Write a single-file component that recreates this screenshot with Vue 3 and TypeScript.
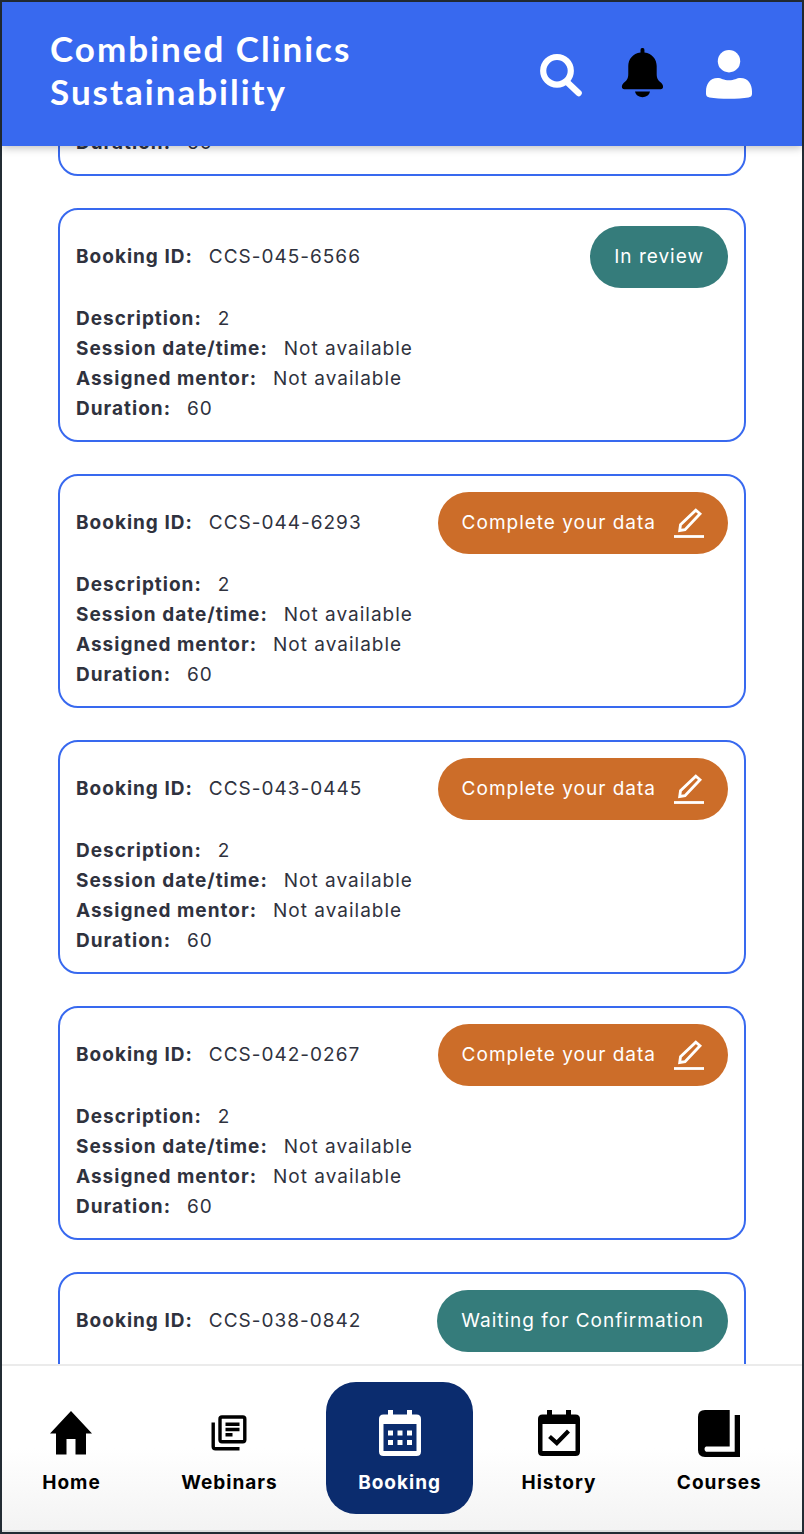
<script setup lang="ts">
import { onMounted, ref } from 'vue'

type Status = 'review' | 'incomplete' | 'waiting'

interface Booking {
  id?: string
  status?: Status
  details: [string, string][]
}

const labels: Record<Status, string> = {
  review: 'In review',
  incomplete: 'Complete your data',
  waiting: 'Waiting for Confirmation',
}

const unassigned = (description: string, duration: number): [string, string][] => [
  ['Description:', description],
  ['Session date/time:', 'Not available'],
  ['Assigned mentor:', 'Not available'],
  ['Duration:', String(duration)],
]

const bookings: Booking[] = [
  { details: [['Duration:', '60']] },
  { id: 'CCS-045-6566', status: 'review', details: unassigned('2', 60) },
  { id: 'CCS-044-6293', status: 'incomplete', details: unassigned('2', 60) },
  { id: 'CCS-043-0445', status: 'incomplete', details: unassigned('2', 60) },
  { id: 'CCS-042-0267', status: 'incomplete', details: unassigned('2', 60) },
  { id: 'CCS-038-0842', status: 'waiting', details: [['Description:', '2']] },
]

const list = ref<HTMLElement | null>(null)

onMounted(() => {
  list.value?.children[1]?.scrollIntoView({ block: 'start' })
})
</script>

<template>
  <div class="app">
    <header class="top">
      <h1>Combined Clinics Sustainability</h1>
      <div class="actions">
        <button type="button" aria-label="Search">
          <svg width="52" height="52" viewBox="0 0 52 52" fill="none" stroke="#fff">
            <circle cx="23" cy="22.800" r="13.800" stroke-width="6.200" />
            <path d="M33 34L44.600 45" stroke-width="6.400" stroke-linecap="round" />
          </svg>
        </button>
        <button type="button" aria-label="Notifications">
          <svg width="52" height="52" viewBox="1 2 52 52">
            <path d="M24 3.500a2 2 0 0 1 4 0V6C36 7 40.500 13 40.500 20v8c0 5 2 7 4.500 9 3 3 2.500 6.500-.5 6.500h-37c-3 0-3.500-3.500-.5-6.500 2.500-2 4.500-4 4.500-9v-8C11.500 13 16 7 24 6z" transform="translate(0 .5) scale(.98 .98)" />
            <path d="M18 45.500h15c-1.500 7.500-13.500 7.500-15 0z" />
          </svg>
        </button>
        <button type="button" aria-label="Profile">
          <svg width="52" height="52" viewBox="-1 0 52 52" fill="#fff">
            <circle cx="26" cy="13.200" r="11.200" />
            <path d="M3 43.500C3 36 7 30 14.500 30c4 0 6 2.300 11.500 2.300S33.500 30 37.500 30C45 30 49 36 49 43.500v2.500c0 2-1.500 3.200-3.500 3.500-10 1.800-29 1.800-39 0-2-.3-3.500-1.500-3.500-3.500z" />
          </svg>
        </button>
      </div>
    </header>

    <main>
      <div ref="list" class="list">
        <article v-for="(b, i) in bookings" :key="i" class="card">
          <div v-if="b.id && b.status" class="head">
            <p class="row"><b>Booking ID:</b><span>{{ b.id }}</span></p>
            <button v-if="b.status === 'incomplete'" type="button" class="pill incomplete">
              {{ labels[b.status] }}
              <svg width="32" height="32" viewBox="0 0 32 32" fill="none" stroke="#fff">
                <path d="M7.700 23.500l.8-5.700L23.800 3.200l4.200 3.600L13 22.600z" stroke-width="2.800" />
                <path d="M2 29.500h30" stroke-width="2.800" />
              </svg>
            </button>
            <span v-else class="pill">{{ labels[b.status] }}</span>
          </div>
          <div>
            <p v-for="[name, value] in b.details" :key="name" class="row">
              <b>{{ name }}</b><span>{{ value }}</span>
            </p>
          </div>
        </article>
      </div>
    </main>

    <nav>
      <a href="#home">
        <svg width="56" height="56" viewBox="0 0 56 56">
          <path d="M28 5L49 27.600H43V48.500H32.500V33H23.500V48.500H13V27.600H7z" />
        </svg>
        Home
      </a>
      <a href="#webinars">
        <svg width="56" height="56" viewBox="0 0 56 56" fill="none" stroke="#000" stroke-width="3.400">
          <rect x="19" y="11" width="24.800" height="24.800" rx="2" />
          <path d="M12.200 16.500V40.500Q12.200 42.800 14.500 42.800H38.500M24.500 18.300H38.500M24.500 23.500H38.500M24.500 28.700H31.500" />
        </svg>
        Webinars
      </a>
      <a href="#booking" class="active" aria-current="page">
        <svg width="56" height="56" viewBox="0 0 56 56" fill="#fff">
          <path fill-rule="evenodd" d="M16 4h5v4.500h14V4h5v4.500h4.500q4.500 0 4.500 4.500v32.500q0 4.500-4.500 4.500h-33q-4.500 0-4.500-4.500V13q0-4.500 4.500-4.500H16zM11.500 18v27h33V18z" />
          <path d="M16 24.500h5v5h-5zM25.500 24.500h5v5h-5zM35 24.500h5v5h-5zM16 34h5v5h-5zM25.500 34h5v5h-5zM35 34h5v5h-5z" />
        </svg>
        Booking
      </a>
      <a href="#history">
        <svg width="56" height="56" viewBox="0 0 56 56">
          <path fill-rule="evenodd" d="M16 4h5v4.500h14V4h5v4.500h4.500q4.500 0 4.500 4.500v32.500q0 4.500-4.500 4.500h-33q-4.500 0-4.500-4.500V13q0-4.500 4.500-4.500H16zM11.500 18v27h33V18z" />
          <path d="M18.500 30.500L25.800 37 37.500 25" fill="none" stroke="#000" stroke-width="4.200" />
        </svg>
        History
      </a>
      <a href="#courses">
        <svg width="56" height="56" viewBox="0 0 56 56">
          <path d="M14 4H38.700V40.500H15a3 3 0 0 0 0 5.200H43.700V9H49V51H14q-7 0-7-7V11q0-7 7-7z" />
        </svg>
        Courses
      </a>
    </nav>
  </div>
</template>

<style>
body {
  margin: 0;
}
</style>

<style scoped>
* {
  box-sizing: border-box;
}

.app {
  display: flex;
  flex-direction: column;
  height: 100vh;
  border: 2px solid #232c34;
  background: #fff;
  color: #2f323e;
  font: 19px/30px Inter, sans-serif;
  letter-spacing: 1px;
}

button {
  border: 0;
  padding: 0;
  background: none;
  color: inherit;
  font: inherit;
  letter-spacing: inherit;
  cursor: pointer;
}

svg {
  display: block;
  flex: none;
}

h1,
p {
  margin: 0;
}

.top {
  position: relative;
  z-index: 1;
  display: flex;
  align-items: center;
  justify-content: space-between;
  min-height: 144px;
  padding: 0 48px;
  background: #3869ef;
  box-shadow: 0 2px 8px rgba(0, 0, 0, 0.25);
}

h1 {
  max-width: 340px;
  padding-bottom: 8px;
  color: #fff;
  font: bold 35px/43px Lato, sans-serif;
  letter-spacing: 2px;
}

.actions {
  display: flex;
  gap: 32px;
}

main {
  flex: 1;
  min-height: 0;
  overflow-y: auto;
  scrollbar-width: none;
}

.list {
  display: flex;
  flex-direction: column;
  gap: 32px;
  padding: 32px 56px;
}

.card {
  display: flex;
  flex-direction: column;
  gap: 16px;
  padding: 16px;
  border: 2px solid #3869ef;
  border-radius: 20px;
  scroll-margin-top: 62px;
}

.head {
  display: flex;
  align-items: center;
  justify-content: space-between;
}

.row {
  display: flex;
  gap: 16px;
}

b {
  font-weight: 700;
}

.pill {
  display: flex;
  align-items: center;
  gap: 16px;
  min-height: 62px;
  padding: 0 24px;
  border-radius: 31px;
  background: #357c7b;
  color: #fff;
}

.incomplete {
  background: #cc6d29;
}

nav {
  display: flex;
  justify-content: space-around;
  padding: 16px 0;
  border-top: 2px solid #ebebeb;
  border-bottom: 2px solid #dedede;
  background: linear-gradient(#fff 50%, #f3f3f3);
}

nav a {
  display: flex;
  flex-direction: column;
  align-items: center;
  gap: 6px;
  padding: 24px 32px 16px;
  border-radius: 30px;
  color: #000;
  font-weight: 700;
  text-decoration: none;
}

nav .active {
  background: #0b2c6e;
  color: #fff;
}
</style>
